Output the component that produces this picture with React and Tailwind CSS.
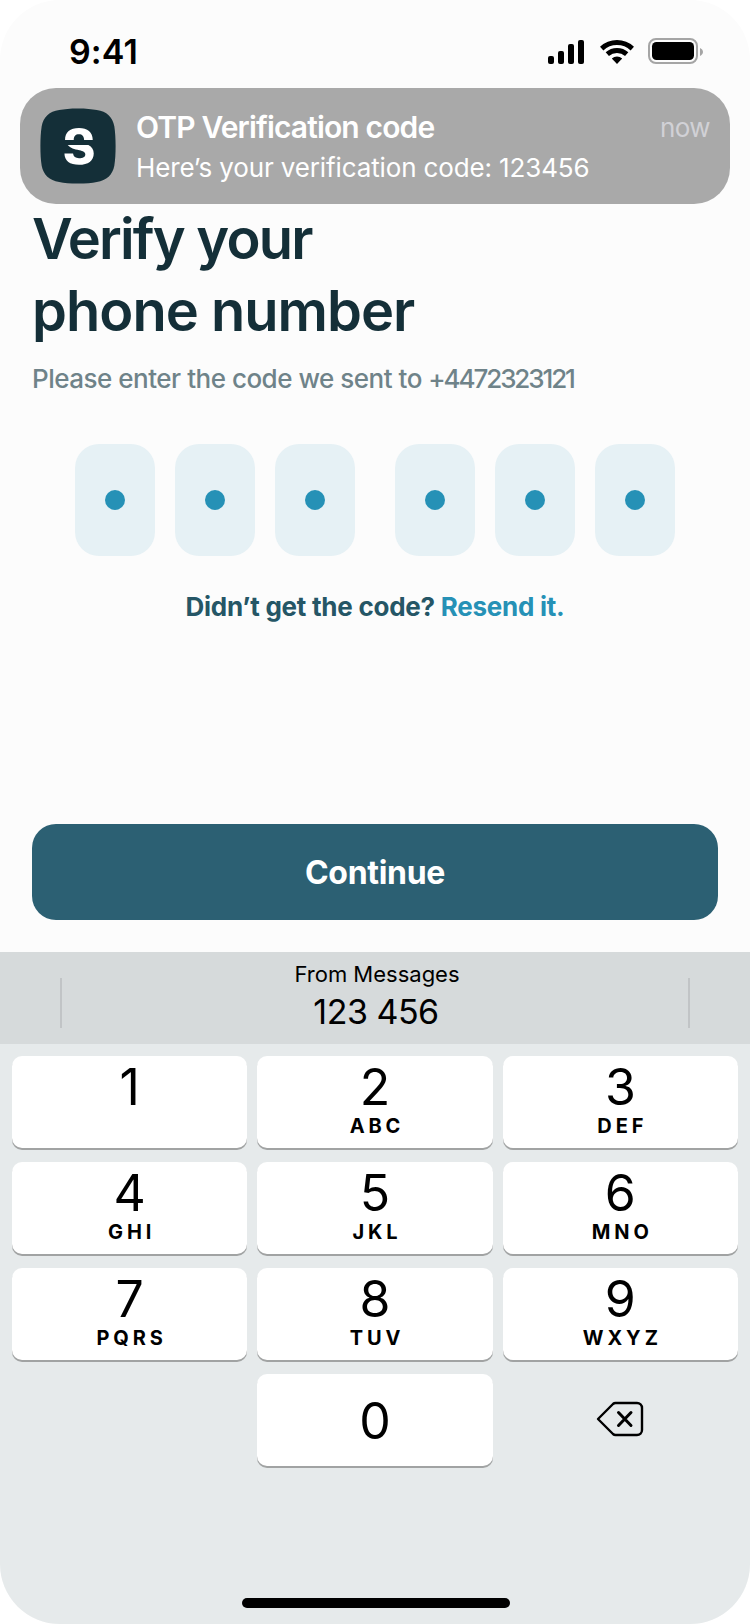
const KEYS = [
  ['1', ''], ['2', 'ABC'], ['3', 'DEF'],
  ['4', 'GHI'], ['5', 'JKL'], ['6', 'MNO'],
  ['7', 'PQRS'], ['8', 'TUV'], ['9', 'WXYZ'],
];

function StatusBar() {
  return (
    <div className="flex h-[88px] items-start justify-between pl-[69px] pr-[46px]">
      <span className="mt-[32px] text-[34px] leading-[40px] font-semibold tracking-[0.1px] text-black">9:41</span>
      <svg className="mt-[36px]" width="158" height="32" viewBox="546 36 158 32">
        <rect x="548" y="56" width="6" height="8" rx="2" />
        <rect x="558" y="51" width="6" height="13" rx="2" />
        <rect x="568" y="44" width="6" height="20" rx="2" />
        <rect x="578" y="40" width="6" height="24" rx="2" />
        <g fill="none" stroke="#000" strokeWidth="4.9">
          <path d="M601.700 48.600A22.400 22.400 0 0 1 632.300 48.600" />
          <path d="M607.300 54.200A14.600 14.600 0 0 1 626.700 54.200" />
        </g>
        <path d="M617 64l-5.200-5.600a8 8 0 0 1 10.400 0z" />
        <rect x="649" y="39" width="48" height="24" rx="7" fill="none" stroke="#a5a5a5" strokeWidth="2" />
        <rect x="652" y="42" width="42" height="18" rx="4.500" />
        <path d="M700 48v8c1.700-.8 3-2.200 3-4s-1.300-3.200-3-4z" fill="#a5a5a5" />
      </svg>
    </div>
  );
}

function AppLogo() {
  return (
    <svg className="shrink-0" width="76" height="76" viewBox="0 -.4 76 76.8">
      <path d="M38 0C46 0 52 .7 57 1.700C67 3 73 9 74.700 18C75.600 24 76 30 76 38S75.600 52 74.700 58C73 67 67 73 57 74.300C52 75.300 46 76 38 76S24 75.300 19 74.300C9 73 3 67 1.300 58C.4 52 0 46 0 38S.4 24 1.300 18C3 9 9 3 19 1.700C24 .7 30 0 38 0Z" fill="#142f38" />
      <path d="M24.900 32C24.900 24 30 19.800 39 19.800C47.500 19.800 52.900 24 52.900 32H44.200C44 28 42.300 26.200 38.900 26.200C35.500 26.200 33.700 28 33.700 32Z" fill="#fff" />
      <path d="M27.600 37H48.500C52 38.600 53.900 41.700 53.900 45.500C53.900 52.800 48.300 57 39 57C29.800 57 24.300 53 24.300 45.600H33C33.300 48.800 35.400 50.300 39 50.300C43 50.300 45.400 49 45.400 46.500C45.400 44.200 43 43.200 39.500 42.300C34 41.200 30.500 40.300 27.600 37Z" fill="#fff" />
    </svg>
  );
}

function Notification() {
  return (
    <div className="mx-[20px] flex h-[116px] items-start rounded-[36px] bg-[#a9a9a9] pt-[20px] pr-[20px] pl-[20px] text-white">
      <AppLogo />
      <div className="ml-[20px] flex flex-1 flex-col">
        <div className="flex items-start justify-between">
          <span className="text-[30px] leading-[38px] font-semibold tracking-[-0.85px]">OTP Verification code</span>
          <span className="text-[26px] leading-[40px] tracking-[-0.6px] text-[#d1d1d6]">now</span>
        </div>
        <span className="text-[26px] leading-[39px] tracking-[-0.13px]">Here’s your verification code: 123456</span>
      </div>
    </div>
  );
}

function CodeBox() {
  return (
    <div className="flex h-[112px] w-[80px] items-center justify-center rounded-3xl bg-[#e6f1f5]">
      <div className="size-5 rounded-full bg-[#2691b6]" />
    </div>
  );
}

function Key({ digit, letters }) {
  return (
    <button className="flex h-[92px] flex-col items-center rounded-[10px] bg-white pt-[3px] shadow-[0_2px_0_#a1a3a3]">
      <span className="text-[50px] leading-[56px]">{digit}</span>
      <span className="-mt-px pl-[4px] text-[20px] leading-[24px] font-bold tracking-[3.9px]">{letters}</span>
    </button>
  );
}

function DeleteIcon() {
  return (
    <svg width="48" height="36" viewBox="0 0 48 36" fill="none" stroke="#000" strokeLinejoin="round" strokeLinecap="round">
      <path d="M19.500 2H41a5 5 0 0 1 5 5V29a5 5 0 0 1-5 5H19.500a4 4 0 0 1-2.500-1L2 18L17 3a4 4 0 0 1 2.500-1Z" strokeWidth="2.400" />
      <path d="M22.500 11.500L35 24.500M35 11.500L22.500 24.500" strokeWidth="3" />
    </svg>
  );
}

export default function App() {
  return (
    <div className="h-[1624px] w-[750px] bg-white">
      <div className="flex h-full flex-col overflow-hidden rounded-[60px] bg-[#fcfcfc] font-['Inter',sans-serif] text-black">
        <StatusBar />
        <Notification />
        <main className="flex h-[748px] flex-col px-[32px]">
          <h1 className="mt-[-1px] text-[56px] leading-[72px] font-semibold text-[#142f38]">
            <span className="block tracking-[-1.8px]">Verify your</span>
            <span className="block tracking-[-0.98px]">phone number</span>
          </h1>
          <p className="mt-[12px] text-[26px] leading-[40px] font-medium tracking-[-0.49px] text-[#6f8389]">
            Please enter the code we sent to <span className="tracking-[-2.1px]">+4472323121</span>
          </p>
          <div className="mt-[45px] flex justify-center gap-[40px]">
            <div className="flex gap-5"><CodeBox /><CodeBox /><CodeBox /></div>
            <div className="flex gap-5"><CodeBox /><CodeBox /><CodeBox /></div>
          </div>
          <p className="mt-[31px] text-center text-[26px] leading-[40px] font-bold tracking-[-0.25px] text-[#255666]">
            Didn’t get the code? <a className="text-[#2691b6]">Resend it.</a>
          </p>
          <button className="mt-auto mb-[32px] h-[96px] rounded-3xl bg-[#2c6073] pt-[2px] text-[32px] leading-[40px] font-bold tracking-[-0.3px] text-white">Continue</button>
        </main>
        <section className="flex flex-1 flex-col bg-[#e6eaeb]">
          <div className="flex h-[92px] items-start justify-between bg-[#d6dadb] px-[60px]">
            <div className="mt-[26px] h-[50px] w-[2px] bg-[#c1c4c6]" />
            <div className="flex flex-col items-center pl-[4px] pt-[7px]">
              <span className="text-[22px] leading-[30px]">From Messages</span>
              <span className="pr-[2px] text-[34px] leading-[46px] tracking-[-0.5px]">123 456</span>
            </div>
            <div className="mt-[26px] h-[50px] w-[2px] bg-[#c1c4c6]" />
          </div>
          <div className="grid grid-cols-3 gap-x-[10px] gap-y-[14px] px-[12px] pt-[12px]">
            {KEYS.map(([d, l]) => <Key key={d} digit={d} letters={l} />)}
            <div />
            <button className="h-[92px] rounded-[10px] bg-white pt-[2px] text-[50px] leading-[90px] shadow-[0_2px_0_#a1a3a3]">0</button>
            <button className="flex h-[92px] items-center justify-center pb-[2px]"><DeleteIcon /></button>
          </div>
          <div className="mt-auto mb-[16px] ml-[242px] h-[10px] w-[268px] rounded-full bg-black" />
        </section>
      </div>
    </div>
  );
}
